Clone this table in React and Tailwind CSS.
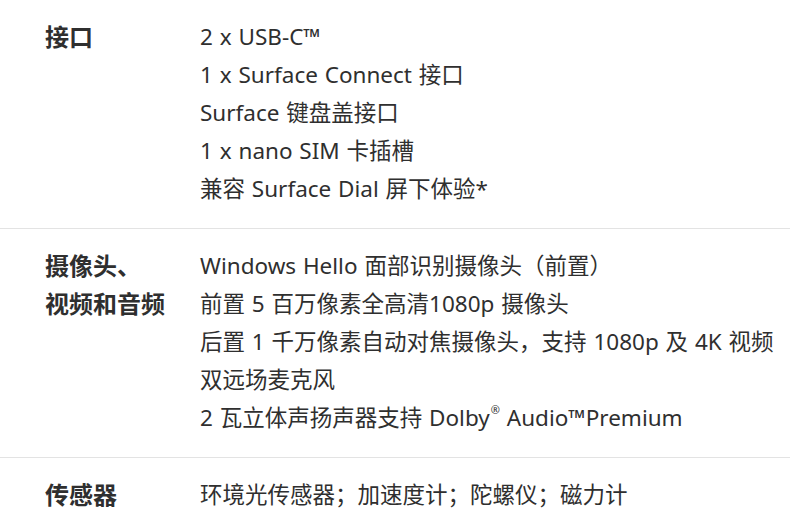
import React from 'react';

const specs = [
  {
    label: ['接口'],
    values: ['2 x USB-C™', '1 x Surface Connect 接口', 'Surface 键盘盖接口', '1 x nano SIM 卡插槽', '兼容 Surface Dial 屏下体验*'],
  },
  {
    label: ['摄像头、', '视频和音频'],
    values: [
      'Windows Hello 面部识别摄像头（前置）',
      '前置 5 百万像素全高清1080p 摄像头',
      '后置 1 千万像素自动对焦摄像头，支持 1080p 及 4K 视频',
      '双远场麦克风',
      <>2 瓦立体声扬声器支持 Dolby<sup className="text-[11px] align-[7px] ml-[1px]">®</sup> Audio™Premium</>,
    ],
  },
  {
    label: ['传感器'],
    values: ['环境光传感器；加速度计；陀螺仪；磁力计'],
  },
];

export default function App() {
  return (
    <div className="w-[790px] h-[531px] bg-white text-[#2f2f2f] overflow-hidden" style={{ fontFamily: '"Noto Sans", "Noto Sans CJK SC", sans-serif' }}>
      {specs.map((s, i) => (
        <div key={i} className="flex border-b border-[#e3e3e3] pt-[18px] pb-[20px]">
          <div className="w-[200px] shrink-0 pl-[45px] text-[24px] font-bold leading-[38px]">
            {s.label.map((l, j) => <div key={j}>{l}</div>)}
          </div>
          <div className="text-[22.5px] leading-[38px] whitespace-nowrap [word-spacing:1px]">
            {s.values.map((v, j) => <div key={j}>{v}</div>)}
          </div>
        </div>
      ))}
    </div>
  );
}
